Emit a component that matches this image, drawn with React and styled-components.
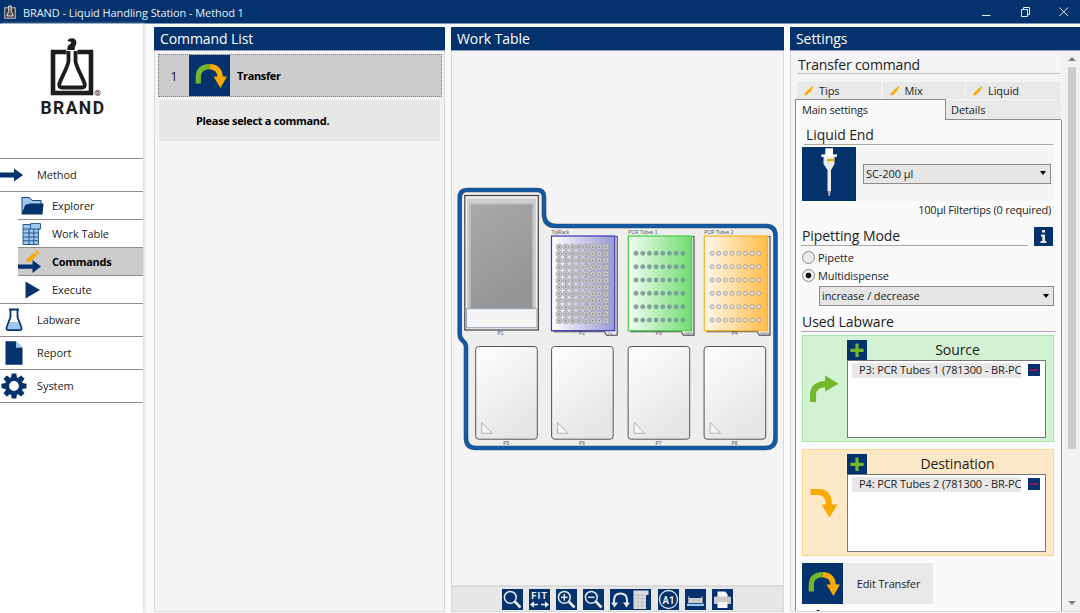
import React from 'react';
import styled, { createGlobalStyle, css } from 'styled-components';

const NAVY = '#03326c';
const GREEN = '#74b72b';
const ORANGE = '#faa900';
const LIGHT_BLUE = '#9dc8ec';

const GlobalStyle = createGlobalStyle`
    * {
        box-sizing: border-box;
    }
    body {
        margin: 0;
        overflow: hidden;
        background: #fafafa;
        color: #1c1c1c;
        font-family: 'Open Sans', 'Noto Sans', sans-serif;
        font-size: 11px;
        letter-spacing: -0.08px;
    }
    svg {
        display: block;
        flex: none;
        letter-spacing: 0;
    }
`;

/* ---------- icons ---------- */

function AppIcon() {
    return (
        <svg width="12" height="14" viewBox="0 0 12 14">
            <rect x="0.8" y="2.8" width="10.4" height="10.4" fill="#333" stroke="#c9c9c9" strokeWidth="1" />
            <path d="M4.8 1h2.4v4.5l2 5.5H2.8l2-5.5z" fill="#555" stroke="#e8e8e8" strokeWidth="1" />
        </svg>
    );
}

function BrandLogo() {
    return (
        <svg width="66" height="86" viewBox="40 36 66 86">
            <path d="M66.500 52H53V93H91V52H77.500" fill="none" stroke="#1d1d1b" strokeWidth="4.600" />
            <path d="M68.500 51V61C68.500 66 60 80 59.200 84.500Q58.900 87.500 62 87.500H82Q85.200 87.500 84.800 84.500C84 80 75.500 66 75.500 61V51" fill="none" stroke="#1d1d1b" strokeWidth="3.800" />
            <path d="M67.400 50Q66.800 46 69.500 44.500Q72 43 70.500 41.500Q68.500 42 67.500 40.500Q69 38 72.500 38.300Q76.500 39 76.400 43Q76.100 45.500 75 46.500Q74.500 48 74.800 50Z" fill="#1d1d1b" />
            <circle cx="97.700" cy="92.800" r="2.700" fill="none" stroke="#555" strokeWidth="0.800" />
            <text x="96.100" y="94.600" fontSize="5" fontWeight="700" fill="#444">R</text>
            <text x="40.500" y="113.700" fontFamily="Roboto, sans-serif" fontSize="17.500" fontWeight="700" textLength="63.500" fill="#1d1d1b">BRAND</text>
        </svg>
    );
}

function MethodIcon() {
    return (
        <svg width="23" height="14" viewBox="0 0 23 14">
            <path d="M0 4.500H14V0.500L23 7L14 13.500V9.500H0Z" fill={NAVY} />
        </svg>
    );
}

function ExplorerIcon() {
    return (
        <svg width="24" height="20" viewBox="0 0 24 20">
            <path d="M1 18V1.500H8L11.500 4.500H20V9H5L1 18Z" fill={LIGHT_BLUE} stroke={NAVY} strokeWidth="0.900" />
            <path d="M1 18.500L4 9.500L8.500 7.500H22.500L21.500 18.500Z" fill={NAVY} />
        </svg>
    );
}

function WorkTableIcon() {
    return (
        <svg width="20" height="24" viewBox="0 0 20 24">
            <path d="M2 2H20V7H17.500V22.500H2Z" fill={LIGHT_BLUE} />
            <path d="M9.500 1.500H19.500V7H17.500V22.500H2V2.500H9.500V7M2 7H19M2 11H17.500M2 15H17.500M2 18.800H17.500M8 7V22.500M12.800 7V22.500" fill="none" stroke="#1d4c86" strokeWidth="0.900" />
        </svg>
    );
}

function CommandsIcon() {
    return (
        <svg width="24" height="26" viewBox="0 0 24 26">
            <path d="M8 13L9.500 9.500L16 3.500L19 6.500L12.500 12.500Z" fill={ORANGE} />
            <path d="M17 2.500L18.500 1L21.500 4L20 5.500Z" fill={ORANGE} />
            <path d="M0 15.500H14.500V11L23 17.500L14.500 24V19.800H0Z" fill={NAVY} />
        </svg>
    );
}

function ExecuteIcon() {
    return (
        <svg width="16" height="18" viewBox="0 0 16 18">
            <path d="M0.500 0.500L15 9L0.500 17.500Z" fill={NAVY} />
        </svg>
    );
}

function LabwareIcon() {
    return (
        <svg width="18" height="24" viewBox="0 0 18 24">
            <path d="M5 14H13L16 21L14 22H4L2 21Z" fill={LIGHT_BLUE} />
            <path d="M5.500 1.800V9L1.600 19.500Q1 22 3.500 22.200H14.500Q17 22 16.400 19.500L12.500 9V1.800M4 1.500H14" fill="none" stroke={NAVY} strokeWidth="1.800" />
        </svg>
    );
}

function ReportIcon() {
    return (
        <svg width="18" height="24" viewBox="0 0 18 24">
            <path d="M0.500 0.300H11L17.500 6.800V23.700H0.500Z" fill={NAVY} />
            <path d="M11 0.300L17.500 6.800H11Z" fill={LIGHT_BLUE} />
        </svg>
    );
}

function SystemIcon() {
    return (
        <svg width="26" height="26" viewBox="-13 -13 26 26">
            {[0, 45, 90, 135, 180, 225, 270, 315].map((a) => (
                <path key={a} d="M-3.200 -7L-2.300 -12.500H2.300L3.200 -7Z" fill={NAVY} transform={`rotate(${a})`} />
            ))}
            <circle r="7" fill="none" stroke={NAVY} strokeWidth="4.200" />
        </svg>
    );
}

function TransferIcon() {
    return (
        <svg width="41" height="41" viewBox="0 0 41 41">
            <path d="M9.300 28.500V22Q9.500 12 20.500 11.700" fill="none" stroke={GREEN} strokeWidth="5.200" />
            <path d="M20.500 11.700Q31 12 31.300 23" fill="none" stroke={ORANGE} strokeWidth="5.200" />
            <path d="M24.500 21.500H38L31.500 33Z" fill={ORANGE} />
        </svg>
    );
}

function PencilIcon() {
    return (
        <svg width="10" height="10" viewBox="0 0 10 10">
            <path d="M0.300 9.700L1 7L6.400 1.700L8.300 3.600L3 9Z" fill={ORANGE} />
            <path d="M7 1.100L8 0.200L9.900 2L8.900 3Z" fill={ORANGE} />
        </svg>
    );
}

function PipetteIcon() {
    return (
        <svg width="54" height="54" viewBox="0 0 54 54">
            <path d="M23.500 1.500H31V7.500H35V9.500H32.500V17L29 23V44H25.500V23L21.500 17V9.500H19.500V7.500H23.500Z" fill="#ececec" />
            <path d="M19.500 7.800H35V9.800H19.500ZM23.500 1.500H31V8H23.500Z" fill="#fff" />
            <rect x="25" y="12" width="7.500" height="2.300" fill="#d6b500" />
            <path d="M25.800 44H28.700L28 49H26.500Z" fill="#a8a8a8" />
        </svg>
    );
}

function SourceArrow() {
    return (
        <svg width="30" height="28" viewBox="0 0 30 28">
            <path d="M4 27V20Q4 9.500 17 9" fill="none" stroke={GREEN} strokeWidth="6" />
            <path d="M16 0.500L29.500 8.800L16 16.500Z" fill={GREEN} />
        </svg>
    );
}

function DestinationArrow() {
    return (
        <svg width="30" height="30" viewBox="0 0 30 30">
            <path d="M1.500 4H9Q20 4 20 17" fill="none" stroke={ORANGE} strokeWidth="6" />
            <path d="M12.500 16.500H28.500L20.500 29.500Z" fill={ORANGE} />
        </svg>
    );
}

function PlusIcon() {
    return (
        <svg width="20" height="21" viewBox="0 0 20 21">
            <path d="M10 3.500V17M3.300 10.300H16.700" stroke={GREEN} strokeWidth="3.200" />
        </svg>
    );
}

/* magnifier used by zoom, zoom in and zoom out */
function ZoomIcon({ sign }) {
    return (
        <svg width="21" height="21" viewBox="0 0 21 21">
            <path d="M12.800 12.500L18.500 18.500" stroke="#e8e8e8" strokeWidth="2.600" />
            <circle cx="8.300" cy="8.300" r="5.900" fill="none" stroke="#e8e8e8" strokeWidth="1.500" />
            {sign && <path d="M5 8.300H11.600" stroke="#e8e8e8" strokeWidth="1.500" />}
            {sign === '+' && <path d="M8.300 5V11.600" stroke="#e8e8e8" strokeWidth="1.500" />}
        </svg>
    );
}

function FitIcon() {
    return (
        <svg width="21" height="21" viewBox="0 0 21 21">
            <text x="2.200" y="10" fontFamily="Roboto, sans-serif" fontSize="9.500" fontWeight="700" textLength="16" fill="#eee">FIT</text>
            <path d="M2 15.500H9M12 15.500H19" stroke="#eee" strokeWidth="1.500" />
            <path d="M5 12.300V18.700L1 15.500ZM16 12.300V18.700L20 15.500Z" fill="#eee" />
        </svg>
    );
}

function RotateTableIcon() {
    return (
        <svg width="41" height="21" viewBox="0 0 41 21">
            <path d="M4 15V11.500Q4 4.500 10.500 4.500T17 11.500V15" fill="none" stroke="#e8e8e8" strokeWidth="2" />
            <path d="M1 13.500H8L4.500 18.500ZM13 13.500H20L16.500 18.500Z" fill="#e8e8e8" />
            <path d="M23.500 1.500H38.500V6H36V20H23.500Z" fill="#dcdcdc" />
            <path d="M28 6V20M32 6V20M23.500 6H36M23.500 9.500H36M23.500 13H36M23.500 16.500H36" stroke="#b4b4b4" strokeWidth="0.600" />
        </svg>
    );
}

function LabelIcon() {
    return (
        <svg width="21" height="21" viewBox="0 0 21 21">
            <circle cx="10.500" cy="10.500" r="9" fill="none" stroke="#e8e8e8" strokeWidth="1.300" />
            <text x="4.500" y="14.600" fontFamily="Roboto, sans-serif" fontSize="11.500" fontWeight="700" textLength="12" lengthAdjust="spacingAndGlyphs" fill="#eee">A1</text>
        </svg>
    );
}

function HeightIcon() {
    return (
        <svg width="21" height="21" viewBox="0 0 21 21">
            <path d="M4 9H17V14H4Z" fill="#c9c9c9" />
            <path d="M3.800 7.500V14.500M17 7.500V14.500" stroke="#eee" strokeWidth="0.900" />
            <path d="M2 14.800H19V17H2Z" fill={LIGHT_BLUE} />
        </svg>
    );
}

function PrintIcon() {
    return (
        <svg width="21" height="21" viewBox="0 0 21 21">
            <path d="M5.500 2.500H13L15.500 5V9H5.500Z" fill="#f5f5f5" />
            <path d="M2 8.500Q2 7.500 3 7.500H18Q19 7.500 19 8.500V15H2Z" fill="#c9c9c9" />
            <path d="M5.500 13H15.500V19H5.500Z" fill="#f5f5f5" />
        </svg>
    );
}

/* ---------- work table drawing ---------- */

const range = (n) => Array.from({ length: n }, (_, i) => i);

function Rack({ x, fill, stroke, name, position, tag, rows, rowStep, rowStart, hole }) {
    return (
        <g>
            <path d={`M${x + 64} 236.500H${x + 65.700}V335.300H${x + 55}L${x + 53} 331.800H${x + 2}`} fill="#eee" stroke="#444" strokeWidth="1.100" />
            <rect x={x} y="236" width="63.300" height="94.700" fill={fill} stroke={stroke} strokeWidth="1.200" />
            {range(rows).map((r) => range(8).map((c) => (
                <g key={`${r}-${c}`}>
                    <circle cx={x + 7.700 + c * 6.700} cy={rowStart + r * rowStep} r={hole.r} fill={hole.fill} stroke={hole.stroke} strokeWidth="0.800" />
                    <circle cx={x + 7.700 + c * 6.700} cy={rowStart + r * rowStep} r="0.900" fill={hole.dot} />
                </g>
            )))}
            <text x={x} y="234.300" fontSize="4.900">{name}</text>
            <text x={x + 27.500} y="335.200" fontSize="4.900">{position}</text>
            <text x={x + 56} y="334.600" fontSize="3.800" fill="#777">{tag}</text>
        </g>
    );
}

function TableDrawing() {
    return (
        <svg width="332" height="270" viewBox="452 183 332 270" fontFamily="'Liberation Sans', sans-serif" fill="#555">
            <defs>
                <linearGradient id="purple"><stop offset="0" stopColor="#fff" /><stop offset="1" stopColor="#9997d5" /></linearGradient>
                <linearGradient id="green"><stop offset="0" stopColor="#f1fdf1" /><stop offset="1" stopColor="#70dc70" /></linearGradient>
                <linearGradient id="orange"><stop offset="0" stopColor="#fff8ed" /><stop offset="1" stopColor="#ffbd48" /></linearGradient>
                <linearGradient id="plate" x2="0.500" y2="1"><stop offset="0" stopColor="#fff" /><stop offset="1" stopColor="#e4e6e5" /></linearGradient>
                <linearGradient id="waste" x2="0.400" y2="1"><stop offset="0" stopColor="#a9a9a9" /><stop offset="1" stopColor="#959595" /></linearGradient>
            </defs>
            {['#33516f', '#0f5aa9'].map((color, i) => (
                <path
                    key={color}
                    d="M467 190H537Q544 190 544 197V214Q544 226 556 226H766Q775.500 226 775.500 236V438Q775.500 448 765 448H476Q466 448 466 438V347Q466 343.500 463.500 341.500Q459.700 338.500 459.700 334V198Q459.700 190 467 190Z"
                    fill={i === 0 ? '#eeeeec' : 'none'}
                    stroke={color}
                    strokeWidth={i === 0 ? 4.6 : 3}
                />
            ))}
            <rect x="464.800" y="195.500" width="73.500" height="134.500" fill="#eee" stroke="#414141" strokeWidth="1.200" />
            <rect x="467" y="198.500" width="69" height="111" fill="#cfcfcf" />
            <rect x="468.800" y="203" width="65" height="106" fill="#bfbfbf" />
            <rect x="470.700" y="204.500" width="61.500" height="105" fill="url(#waste)" />
            <rect x="466.500" y="308.700" width="70.500" height="19" fill="#f5f5f5" stroke="#8fa1b1" strokeWidth="0.900" />
            <text x="497.500" y="335.200" fontSize="4.900">P1</text>
            <Rack x={551.500} fill="url(#purple)" stroke="#3937b5" name="TipRack" position="P2" tag="Tip" rows={12} rowStart={247} rowStep={6.700} hole={{ r: 2.900, fill: '#c9c9cb', stroke: '#a0a0a2', dot: '#8c8c8c' }} />
            <Rack x={628.300} fill="url(#green)" stroke="#42d045" name="PCR Tubes 1" position="P3" tag="HARD" rows={6} rowStart={253.300} rowStep={13.350} hole={{ r: 2, fill: '#87a79e', stroke: '#71978c', dot: '#78a1a3' }} />
            <Rack x={704.300} fill="url(#orange)" stroke="#ffae25" name="PCR Tubes 2" position="P4" tag="HARD" rows={6} rowStart={253.300} rowStep={13.350} hole={{ r: 2, fill: '#d8d8d8', stroke: '#999', dot: '#f0f0f0' }} />
            {[475.7, 551.6, 628.1, 704.1].map((x, i) => (
                <g key={x}>
                    <rect x={x} y="346.500" width="61.600" height="92.700" rx="3" fill="url(#plate)" stroke="#555" strokeWidth="1" />
                    <path d={`M${x + 6} 422.500V433.300H${x + 16.500}Z`} fill="#f6f6f6" stroke="#aaa" strokeWidth="0.900" />
                    <text x={x + 27.500} y="445.300" fontSize="4.900">{`P${i + 5}`}</text>
                </g>
            ))}
        </svg>
    );
}

/* ---------- page ---------- */

const menu = [
    { label: 'Method', icon: <MethodIcon /> },
    { label: 'Explorer', icon: <ExplorerIcon />, sub: true },
    { label: 'Work Table', icon: <WorkTableIcon />, sub: true },
    { label: 'Commands', icon: <CommandsIcon />, sub: true, flush: true, active: true },
    { label: 'Execute', icon: <ExecuteIcon />, sub: true, inset: 7, last: true },
    { label: 'Labware', icon: <LabwareIcon />, inset: 5 },
    { label: 'Report', icon: <ReportIcon />, inset: 5 },
    { label: 'System', icon: <SystemIcon />, inset: 1 },
];

const tools = [
    { id: 'zoom', icon: <ZoomIcon /> },
    { id: 'fit', icon: <FitIcon /> },
    { id: 'in', icon: <ZoomIcon sign="+" /> },
    { id: 'out', icon: <ZoomIcon sign="-" /> },
    { id: 'rotate', icon: <RotateTableIcon />, wide: true },
    { id: 'label', icon: <LabelIcon /> },
    { id: 'height', icon: <HeightIcon /> },
    { id: 'print', icon: <PrintIcon /> },
];

function LabwareSlot({ title, item, arrow, kind }) {
    return (
        <Slot $kind={kind}>
            <SlotArrow>{arrow}</SlotArrow>
            <SlotMain>
                <SlotHead>
                    <AddButton><PlusIcon /></AddButton>
                    <SlotTitle>{title}</SlotTitle>
                </SlotHead>
                <SlotList>
                    <SlotItem>{item}</SlotItem>
                    <RemoveButton><Minus /></RemoveButton>
                </SlotList>
            </SlotMain>
        </Slot>
    );
}

export default function App() {
    return (
        <>
            <GlobalStyle />
            <Window>
                <TitleBar>
                    <AppIcon />
                    <WindowTitle>BRAND - Liquid Handling Station - Method 1</WindowTitle>
                    <svg width="88" height="12" viewBox="0 0 88 12" fill="none" stroke="#e6ecf4">
                        <path d="M1 9.500H9.500" />
                        <path d="M40.500 3.500H46.500V10.500H40.500ZM42.500 3.500V1.500H48.500V8.500H46.500" />
                        <path d="M78.500 1.500L87 10M87 1.500L78.500 10" />
                    </svg>
                </TitleBar>
                <Body>
                    <Sidebar>
                        <LogoBox><BrandLogo /></LogoBox>
                        {menu.map((m) => (
                            <MenuItem key={m.label} $sub={m.sub} $active={m.active} $last={m.last}>
                                <MenuIcon $sub={m.sub} $inset={m.inset} $flush={m.flush}>{m.icon}</MenuIcon>
                                <MenuLabel $sub={m.sub}>{m.label}</MenuLabel>
                            </MenuItem>
                        ))}
                    </Sidebar>

                    <CommandPanel>
                        <PanelHeader>Command List</PanelHeader>
                        <CommandRow>
                            <CommandIndex>1</CommandIndex>
                            <IconTile><TransferIcon /></IconTile>
                            <CommandName>Transfer</CommandName>
                        </CommandRow>
                        <Hint>Please select a command.</Hint>
                    </CommandPanel>

                    <TablePanel>
                        <PanelHeader>Work Table</PanelHeader>
                        <Canvas><TableDrawing /></Canvas>
                        <Toolbar>
                            {tools.map((t) => (
                                <Tool key={t.id} $wide={t.wide}>{t.icon}</Tool>
                            ))}
                        </Toolbar>
                    </TablePanel>

                    <SettingsPanel>
                        <PanelHeader>Settings</PanelHeader>
                        <SettingsBody>
                            <SettingsColumn>
                                <SettingsTitle>Transfer command</SettingsTitle>
                                <TopTabs>
                                    <TopTab><PencilIcon />Tips</TopTab>
                                    <TopTab><PencilIcon />Mix</TopTab>
                                    <TopTab><PencilIcon />Liquid</TopTab>
                                </TopTabs>
                                <Tabs>
                                    <ActiveTab>Main settings</ActiveTab>
                                    <DetailsTab>Details</DetailsTab>
                                </Tabs>
                                <Sheet>
                                    <LiquidTitle>Liquid End</LiquidTitle>
                                    <LiquidBox>
                                        <PipetteTile><PipetteIcon /></PipetteTile>
                                        <Select>SC-200 µl<Caret /></Select>
                                    </LiquidBox>
                                    <TipsNote>100µl Filtertips (0 required)</TipsNote>
                                    <ModeHead>
                                        <ModeTitle>Pipetting Mode</ModeTitle>
                                        <InfoButton>
                                            <svg width="19" height="19" viewBox="0 0 19 19" fill="#e8e8e8">
                                                <path d="M8 3H11V5.500H8ZM7 7.500H11V14H12.500V16H6.500V14H8.300V9.500H7Z" />
                                            </svg>
                                        </InfoButton>
                                    </ModeHead>
                                    <RadioRow><Radio />Pipette</RadioRow>
                                    <RadioRow><Radio $checked />Multidispense</RadioRow>
                                    <ModeSelect>increase / decrease<Caret /></ModeSelect>
                                    <UsedTitle>Used Labware</UsedTitle>
                                    <LabwareSlot kind="source" title="Source" item="P3: PCR Tubes 1 (781300 - BR-PC" arrow={<SourceArrow />} />
                                    <LabwareSlot kind="destination" title="Destination" item="P4: PCR Tubes 2 (781300 - BR-PC" arrow={<DestinationArrow />} />
                                    <EditButton>
                                        <IconTile><TransferIcon /></IconTile>
                                        <EditLabel>Edit Transfer</EditLabel>
                                    </EditButton>
                                    <InfoTitle>Info</InfoTitle>
                                </Sheet>
                            </SettingsColumn>
                            <Scrollbar>
                                <ScrollArrow $up />
                                <ScrollThumb />
                                <ScrollArrow />
                            </Scrollbar>
                        </SettingsBody>
                    </SettingsPanel>
                </Body>
            </Window>
        </>
    );
}

const Window = styled.div`
    display: flex;
    flex-direction: column;
    width: 1080px;
    height: 613px;
    overflow: hidden;
`;

const TitleBar = styled.header`
    display: flex;
    align-items: center;
    height: 24px;
    padding: 0 11px 0 4px;
    background: ${NAVY};
    border-bottom: 1px solid #7a93b3;
    color: #e8eef6;
`;

const WindowTitle = styled.div`
    flex: 1;
    margin-left: 7px;
    padding-top: 1px;
    font-size: 11px;
    white-space: nowrap;
`;

const Body = styled.main`
    display: flex;
    flex: 1;
    min-height: 0;
`;

const Sidebar = styled.nav`
    width: 143px;
    margin-right: 11px;
    background: #fff;
    box-shadow: 2px 0 3px #dedede;
`;

const LogoBox = styled.div`
    height: 135px;
    padding: 12px 0 0 40px;
    border-bottom: 1px solid #8c8c8c;
`;

const MenuItem = styled.div`
    display: flex;
    align-items: center;
    height: 33px;
    border-bottom: 1px solid #8c8c8c;
    font-size: 11px;

    ${({ $sub }) => $sub && css`
        height: 28px;
        margin-left: 18px;
    `}
    ${({ $last }) => $last && css`
        margin-left: 0;
        padding-left: 18px;
    `}
    ${({ $active }) => $active && css`
        background: #ccc;
        color: #000;
        font-weight: 700;
        letter-spacing: -0.3px;
    `}
`;

const MenuIcon = styled.div`
    flex: none;
    width: ${({ $sub }) => ($sub ? 34 : 37)}px;
    padding-left: ${({ $sub, $inset, $flush }) => $inset || ($sub && !$flush ? 3 : 0)}px;
`;

const MenuLabel = styled.span`
    padding-bottom: ${({ $sub }) => ($sub ? 0 : 2)}px;
`;

const Panel = styled.section`
    display: flex;
    flex-direction: column;
    height: 585px;
    margin-top: 3px;
    background: #f4f4f4;
    border: 1px solid #d9d9d9;
    border-top: none;
`;

const CommandPanel = styled(Panel)`
    width: 291px;
`;

const TablePanel = styled(Panel)`
    width: 333px;
    margin-left: 6px;
`;

const SettingsPanel = styled(Panel)`
    width: 290px;
    margin-left: 6px;
    border-right: none;
`;

const PanelHeader = styled.h2`
    flex: none;
    height: 24px;
    margin: 0 -1px;
    padding-left: 6px;
    background: ${NAVY};
    border-bottom: 1px solid #8da3c0;
    color: #fff;
    font-size: 14px;
    font-weight: 400;
    line-height: 23px;
`;

const CommandRow = styled.div`
    display: flex;
    align-items: center;
    width: 284px;
    height: 43px;
    margin: 3px 0 0 3px;
    background: #ccc;
    border: 1px dotted #7c7c7c;
`;

const CommandIndex = styled.div`
    width: 30px;
    text-align: center;
    font-size: 13px;
`;

const IconTile = styled.div`
    flex: none;
    width: 41px;
    height: 41px;
    background: ${NAVY};
`;

const CommandName = styled.div`
    margin-left: 7px;
    color: #000;
    font-weight: 700;
    letter-spacing: -0.35px;
`;

const Hint = styled.div`
    width: 281px;
    height: 41px;
    margin: 3px 0 0 4px;
    padding-left: 37px;
    background: #e7e7e7;
    color: #000;
    font-weight: 700;
    letter-spacing: -0.32px;
    line-height: 41px;
`;

const Canvas = styled.div`
    display: flex;
    align-items: center;
    flex: 1;
    min-height: 0;
`;

const Toolbar = styled.div`
    display: flex;
    align-items: flex-start;
    gap: 6px;
    height: 26px;
    padding: 2px 0 0 50px;
    background: #e7e7e7;
    border-top: 2px solid #dadada;
`;

const Tool = styled.div`
    width: ${({ $wide }) => ($wide ? 41 : 21)}px;
    height: 21px;
    margin-right: ${({ $wide }) => ($wide ? 1 : 0)}px;
    background: ${NAVY};
`;

const SettingsBody = styled.div`
    display: flex;
    flex: 1;
    min-height: 0;
    overflow: hidden;
`;

const SettingsColumn = styled.div`
    width: 271px;
    padding-left: 4px;
`;

const SectionTitle = styled.h3`
    margin: 0;
    border-bottom: 1px solid #a9a9a9;
    font-size: 14px;
    font-weight: 400;
    line-height: 19px;
    white-space: nowrap;
`;

const SettingsTitle = styled(SectionTitle)`
    height: 23px;
    margin: 0 2px 0 2px;
    padding: 4px 0 0 1px;
    border-bottom: 1px solid #c4c4c4;
    letter-spacing: -0.15px;
`;

const TopTabs = styled.div`
    display: grid;
    grid-template-columns: 84px 82px 94px;
    gap: 1.5px;
    height: 25px;
    margin: 0 2px;
    padding-top: 8px;
`;

const TopTab = styled.div`
    display: flex;
    align-items: center;
    gap: 5px;
    padding-left: 7px;
    background: #e8e8e8;
`;

const Tabs = styled.div`
    display: flex;
    align-items: flex-end;
    width: 266px;
    height: 21px;
`;

const ActiveTab = styled.div`
    width: 151px;
    height: 21px;
    padding-left: 6px;
    background: #fafafa;
    border: 1px solid #8c8c8c;
    border-bottom: none;
    letter-spacing: -0.2px;
    line-height: 20px;
`;

const DetailsTab = styled.div`
    flex: 1;
    height: 20px;
    padding-left: 5px;
    background: #e9e9e9;
    border-bottom: 1px solid #8c8c8c;
    line-height: 19px;
`;

const Sheet = styled.div`
    width: 267px;
    height: 500px;
    padding: 4px 7px 0 6px;
    background: #fafafa;
    border: 1px solid #8c8c8c;
    border-top: none;
`;

const LiquidTitle = styled(SectionTitle)`
    height: 21px;
    margin: 0 1px 0 2px;
    padding: 1px 0 0 2px;
`;

const LiquidBox = styled.div`
    display: flex;
    align-items: center;
    gap: 7px;
    width: 252px;
    height: 54px;
    margin-top: 2px;
    padding-bottom: 1px;
    background: #f4f4f4;
`;

const PipetteTile = styled.div`
    width: 54px;
    height: 54px;
    margin-bottom: -1px;
    background: ${NAVY};
`;

const Select = styled.div`
    display: flex;
    align-items: center;
    justify-content: space-between;
    width: 188px;
    height: 20px;
    padding: 0 4px 1px 2px;
    background: #e6e6e6;
    border: 1px solid #8c8c8c;
`;

const Caret = styled.span`
    border: 3px solid transparent;
    border-top: 4px solid #000;
    border-bottom: none;
`;

const TipsNote = styled.div`
    padding-right: 3px;
    letter-spacing: -0.2px;
    line-height: 18px;
    text-align: right;
`;

const ModeHead = styled.div`
    display: flex;
    align-items: flex-end;
    justify-content: space-between;
    width: 251px;
    height: 27px;
`;

const ModeTitle = styled(SectionTitle)`
    width: 227px;
    height: 20px;
    margin-left: -1px;
    padding-left: 1px;
`;

const InfoButton = styled.div`
    width: 19px;
    height: 19px;
    background: ${NAVY};
`;

const RadioRow = styled.div`
    display: flex;
    align-items: center;
    gap: 3px;
    height: 18px;
    position: relative;
    top: 2px;
`;

const Radio = styled.span`
    width: 13px;
    height: 13px;
    border: 1px solid #8a8a8a;
    border-radius: 50%;
    background: ${({ $checked }) => ($checked ? 'radial-gradient(circle, #111 2.500px, #eee 3.200px)' : '#eaeaea')};
`;

const ModeSelect = styled(Select)`
    width: 235px;
    margin: 4px 0 0 17px;
`;

const UsedTitle = styled(SectionTitle)`
    width: 255px;
    height: 26px;
    margin-left: -1px;
    padding: 6px 0 0 1px;
`;

const Slot = styled.div`
    display: flex;
    width: 252px;
    height: 107px;
    margin: 3px 0 7px;
    background: ${({ $kind }) => ($kind === 'source' ? '#d3f1d3' : '#fce8c6')};
    border: 1px solid ${({ $kind }) => ($kind === 'source' ? '#a6e4a6' : '#fbd593')};
`;

const SlotArrow = styled.div`
    display: flex;
    align-items: center;
    width: 44px;
    padding-left: 6px;
`;

const SlotMain = styled.div`
    width: 199px;
    padding-top: 4px;
`;

const SlotHead = styled.div`
    display: flex;
    height: 20px;
`;

const AddButton = styled.div`
    width: 20px;
    height: 20px;
    background: ${NAVY};
`;

const SlotTitle = styled.div`
    flex: 1;
    padding-left: 2px;
    font-size: 14px;
    line-height: 20px;
    text-align: center;
`;

const SlotList = styled.div`
    display: flex;
    align-items: flex-start;
    gap: 7px;
    height: 78px;
    padding: 2px 0 0 4px;
    background: #fff;
    border: 1px solid #777;
`;

const SlotItem = styled.div`
    flex: none;
    width: 169px;
    height: 15px;
    padding-left: 7px;
    background: #e7e7e7;
    letter-spacing: -0.12px;
    line-height: 14px;
    white-space: nowrap;
    overflow: hidden;
`;

const RemoveButton = styled.div`
    flex: none;
    width: 12px;
    height: 12px;
    margin-top: 1px;
    padding: 5px 2px;
    background: ${NAVY};
`;

const Minus = styled.div`
    height: 2px;
    background: #8f1650;
`;

const EditButton = styled.div`
    display: flex;
    align-items: center;
    width: 131px;
    height: 41px;
    background: #e8e8e8;
`;

const EditLabel = styled.div`
    flex: 1;
    padding-left: 1px;
    letter-spacing: -0.15px;
    text-align: center;
`;

const InfoTitle = styled(SectionTitle)`
    padding-top: 2px;
`;

const Scrollbar = styled.div`
    display: flex;
    flex-direction: column;
    align-items: center;
    width: 18px;
    padding: 6px 0 6px 2px;
    background: #f1f1f1;
`;

const ScrollArrow = styled.span`
    border: 4px solid transparent;
    ${({ $up }) => ($up
        ? css`border-top: none; border-bottom: 4px solid #808080;`
        : css`margin-top: auto; border-bottom: none; border-top: 4px solid #808080;`)}
`;

const ScrollThumb = styled.div`
    width: 8px;
    height: 382px;
    margin-top: 6px;
    background: #cdcdcd;
`;
